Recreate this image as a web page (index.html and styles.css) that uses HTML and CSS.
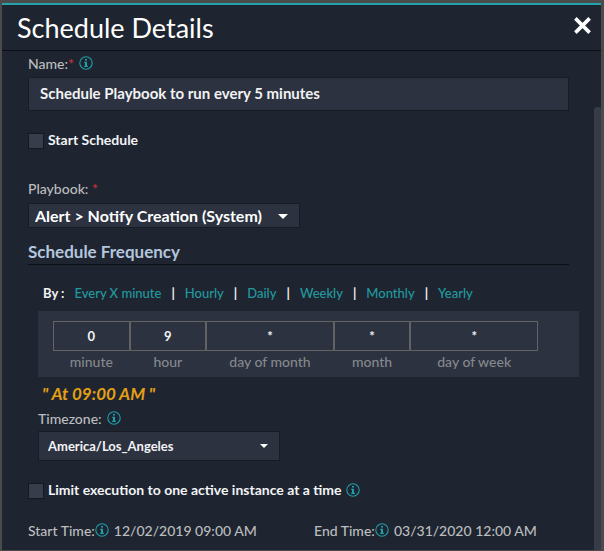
FILE: index.html
```html
<!DOCTYPE html>
<html lang="en">
<head>
    <meta charset="UTF-8">
    <meta name="viewport" content="width=device-width, initial-scale=1.0">
    <title>Schedule Details</title>
    <link rel="stylesheet" href="styles.css">
</head>
<body>
    <!-- Shared info icon -->
    <svg class="icon-defs" aria-hidden="true">
        <symbol id="info" viewBox="0 0 14 14">
            <circle cx="7" cy="7" r="6.2" fill="none" stroke="currentColor" stroke-width="1.1"/>
            <path d="M6 3h2v1.6H6zM5.2 5.8H8v4h.9V11H5.200V9.800H6V7h-.8z" fill="currentColor"/>
        </symbol>
    </svg>

    <div class="modal">
        <div class="modal-header">
            <h1>Schedule Details</h1>
            <button type="button" class="close-btn" aria-label="Close">
                <svg viewBox="0 0 16 16"><path d="M2 2l12 12M14 2L2 14" stroke="currentColor" stroke-width="3"/></svg>
            </button>
        </div>

        <form class="modal-body">
            <!-- Name -->
            <div class="label-row">
                <label for="name">Name:<span class="required">*</span></label>
                <svg class="info-icon"><use href="#info"/></svg>
            </div>
            <input type="text" id="name" class="name-input" value="Schedule Playbook to run every 5 minutes">

            <div class="check-row start-row">
                <input type="checkbox" id="start">
                <label for="start">Start Schedule</label>
            </div>

            <!-- Playbook -->
            <div class="label-row">
                <label for="playbook">Playbook: <span class="required">*</span></label>
            </div>
            <div class="select-box playbook-select">
                <select id="playbook">
                    <option>Alert &gt; Notify Creation (System)</option>
                </select>
            </div>

            <h2>Schedule Frequency</h2>

            <!-- Frequency -->
            <div class="frequency">
                <div class="by-row">
                    <span class="by">By :</span>
                    <a href="#">Every X minute</a><span class="bar">|</span>
                    <a href="#">Hourly</a><span class="bar">|</span>
                    <a href="#">Daily</a><span class="bar">|</span>
                    <a href="#">Weekly</a><span class="bar">|</span>
                    <a href="#">Monthly</a><span class="bar">|</span>
                    <a href="#">Yearly</a>
                </div>
                <div class="cron-panel">
                    <div class="cron-grid">
                        <div class="cron-field">
                            <input type="text" id="minute" value="0">
                            <label for="minute">minute</label>
                        </div>
                        <div class="cron-field">
                            <input type="text" id="hour" value="9">
                            <label for="hour">hour</label>
                        </div>
                        <div class="cron-field">
                            <input type="text" id="dom" value="*">
                            <label for="dom">day of month</label>
                        </div>
                        <div class="cron-field">
                            <input type="text" id="month" value="*">
                            <label for="month">month</label>
                        </div>
                        <div class="cron-field">
                            <input type="text" id="dow" value="*">
                            <label for="dow">day of week</label>
                        </div>
                    </div>
                </div>
                <p class="summary">" At 09:00 AM "</p>
                <div class="label-row">
                    <label for="timezone">Timezone:</label>
                    <svg class="info-icon"><use href="#info"/></svg>
                </div>
                <div class="select-box timezone-select">
                    <select id="timezone">
                        <option>America/Los_Angeles</option>
                    </select>
                </div>
            </div>

            <div class="check-row limit-row">
                <input type="checkbox" id="limit">
                <label for="limit">Limit execution to one active instance at a time</label>
                <svg class="info-icon"><use href="#info"/></svg>
            </div>

            <!-- Start and end -->
            <div class="times">
                <div class="time">
                    <span>Start Time:</span>
                    <svg class="info-icon"><use href="#info"/></svg>
                    <span class="time-value">12/02/2019 09:00 AM</span>
                </div>
                <div class="time">
                    <span>End Time:</span>
                    <svg class="info-icon"><use href="#info"/></svg>
                    <span class="time-value">03/31/2020 12:00 AM</span>
                </div>
            </div>
            <div class="scroll-thumb"></div>
        </form>
    </div>
</body>
</html>
```
FILE: styles.css
```css
* {
    box-sizing: border-box;
}
body {
    margin: 0;
    padding: 3px 3px 1px 2px;
    background: #4b4b4c;
    color: #f2f3f5;
    font-family: Lato, sans-serif;
    font-size: 14px;
    font-weight: 500;
}
input, select, button {
    font: inherit;
    color: inherit;
}
.icon-defs {
    position: absolute;
    width: 0;
    height: 0;
}
.modal {
    background: #1e2531;
    border-top: 2px solid #24a3ab;
}
.modal-header {
    display: flex;
    justify-content: space-between;
    align-items: center;
    height: 46px;
    padding: 0 9px 0 15px;
    border-bottom: 1px solid #0b0e13;
}
h1 {
    margin: 0;
    font-size: 27px;
    font-weight: 400;
    color: #fff;
}
.close-btn {
    display: flex;
    padding: 0 0 4px;
    border: none;
    background: none;
    color: #fff;
    cursor: pointer;
}
.close-btn svg {
    width: 19px;
    height: 19px;
}
.modal-body {
    position: relative;
    padding: 2px 32px 10px 26px;
}
.label-row {
    display: flex;
    align-items: center;
    gap: 5px;
    height: 20px;
    color: #bcbdbe;
}
.required {
    color: #d0343c;
}
.info-icon {
    width: 14px;
    height: 14px;
    color: #1f9fa8;
}
.name-input {
    display: block;
    width: 100%;
    height: 34px;
    margin: 4px 0 22px;
    padding: 0 11px 2px;
    background: #2c323f;
    border: 1px solid #171c25;
    font-size: 15px;
    font-weight: 700;
}
.check-row {
    display: flex;
    align-items: flex-start;
    gap: 4px;
    height: 16px;
    line-height: 14px;
    font-weight: 700;
}
.check-row input {
    appearance: none;
    width: 16px;
    height: 16px;
    margin: 0;
    background: #373d4b;
    border: 1px solid #14181f;
}
.start-row {
    margin-bottom: 29px;
}
.select-box {
    position: relative;
    background: #2c323f;
    border: 1px solid #171c25;
}
.select-box::after {
    content: "";
    position: absolute;
    top: 50%;
    right: 11px;
    margin-top: -2px;
    border: 5px solid transparent;
    border-top-color: #fff;
    border-bottom: none;
    pointer-events: none;
}
.select-box select {
    display: block;
    appearance: none;
    width: 100%;
    height: 100%;
    border: none;
    background: none;
}
.playbook-select {
    width: 272px;
    height: 25px;
    margin: 5px 0 14px;
}
.playbook-select select {
    padding: 0 6px;
    font-size: 16px;
    font-weight: 700;
    color: #fff;
}
h2 {
    margin: 0 0 18px;
    padding-bottom: 2px;
    border-bottom: 1px solid #0b0e13;
    font-size: 17px;
    line-height: 20px;
    font-weight: 700;
    color: #b4c5de;
}
.frequency {
    margin: 0 -10px 0 10px;
}
.by-row {
    display: flex;
    align-items: center;
    height: 20px;
    margin-bottom: 8px;
    padding-left: 5px;
    font-size: 13px;
}
.by {
    margin-right: 10px;
    font-weight: 700;
}
.by-row a {
    color: #22999f;
    text-decoration: none;
}
.bar {
    margin: 0 10px;
    font-weight: 700;
}
.cron-panel {
    padding: 10px 41px 4px 15px;
    background: #2c323f;
}
.cron-grid {
    display: grid;
    grid-template-columns: 3fr 3fr 5fr 3fr 5fr;
}
.cron-field {
    text-align: center;
}
.cron-field input {
    display: block;
    width: 100%;
    height: 30px;
    padding: 0;
    background: none;
    border: 1px solid #636363;
    text-align: center;
    font-size: 13px;
    font-weight: 700;
}
.cron-field label {
    display: block;
    line-height: 22px;
    color: #85888d;
}
.summary {
    margin: 7px 0 4px 4px;
    font-size: 17px;
    line-height: 20px;
    font-weight: 700;
    font-style: italic;
    color: #e5a013;
}
.timezone-select {
    width: 242px;
    height: 30px;
    margin: 3px 0 22px;
}
.timezone-select::after {
    border-width: 4px;
    border-bottom: none;
}
.timezone-select select {
    padding: 0 9px;
    font-size: 13px;
    font-weight: 700;
}
.limit-row {
    margin-bottom: 21px;
}
.times {
    display: grid;
    grid-template-columns: 286px 1fr;
    color: #bcbdbe;
}
.time {
    display: flex;
    align-items: center;
    height: 20px;
}
.time-value {
    margin-left: 5px;
}
.scroll-thumb {
    position: absolute;
    top: 56px;
    right: 0;
    bottom: 0;
    width: 7px;
    background: #353b49;
    border-radius: 3px 3px 0 0;
}
```
